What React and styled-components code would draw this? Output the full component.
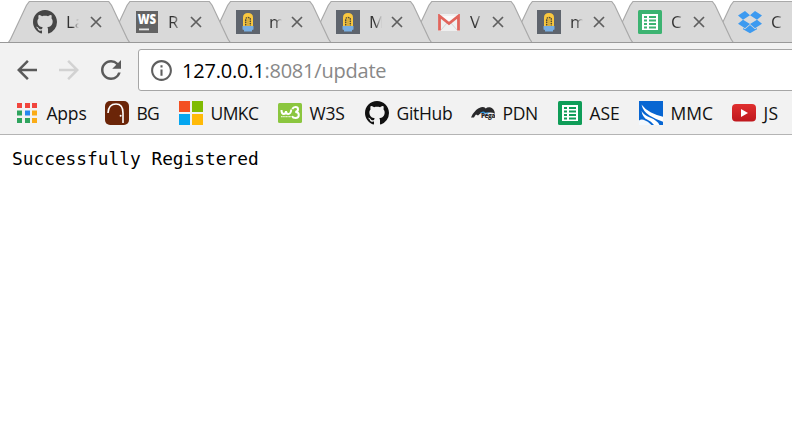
import React from "react";
import styled, { createGlobalStyle } from "styled-components";
import { MdArrowBack, MdArrowForward, MdRefresh, MdInfoOutline } from "react-icons/md";

const GlobalStyle = createGlobalStyle`
  body { margin: 0; background: #fff; overflow: hidden; }
  * { box-sizing: border-box; }
  svg { display: block; flex: none; }
`;

const Browser = styled.div`
  width: 792px;
  height: 445px;
  overflow: hidden;
  background: #fff;
  font-family: "Open Sans", "Noto Sans", sans-serif;
  font-size: 17.5px;
  color: #111;
`;

const TabStrip = styled.div`
  display: flex;
  height: 43px;
  padding: 1px 0 0 8px;
  border-bottom: 1px solid #999;
  isolation: isolate;
`;

const Tab = styled.div`
  position: relative;
  z-index: ${(p) => p.$order};
  flex: none;
  display: flex;
  align-items: center;
  width: 122px;
  height: 41px;
  margin-right: -21.4px;
  padding: 1px 0 0 ${(p) => p.$inset}px;
  &::before,
  &::after {
    content: "";
    position: absolute;
    z-index: -1;
    inset: 0;
    background: #a9a9a9;
    clip-path: polygon(0 100%, 2px 38px, 18px 4px, 21px 0, 101px 0, 104px 4px, 120px 38px, 122px 100%);
  }
  &::after {
    background: #d9d9d9;
    clip-path: polygon(1.4px 100%, 3.3px 38px, 19px 4.5px, 21.6px 1px, 100.4px 1px, 103px 4.5px, 118.7px 38px, 120.6px 100%);
  }
`;

const TabIcon = styled.span`
  flex: none;
  display: flex;
  justify-content: center;
  width: 24px;
  color: #464646;
`;

const TabTitle = styled.span`
  flex: none;
  width: 13px;
  margin-left: 9px;
  overflow: hidden;
  white-space: nowrap;
  font-size: 17px;
  line-height: 24px;
  color: #333;
  mask-image: linear-gradient(to right, #000 45%, transparent 100%);
`;

const CloseButton = styled.span`
  margin-left: ${(p) => p.$gap}px;
  color: #5f5f5f;
`;

const Toolbar = styled.div`
  display: flex;
  align-items: flex-start;
  height: 52px;
  padding-top: 6px;
  background: #f2f2f2;
`;

const NavButton = styled.span`
  flex: none;
  width: 42px;
  padding: 6px 0 0 12px;
  color: ${(p) => (p.$disabled ? "#d2d2d2" : "#5a5a5a")};
`;

const AddressBar = styled.div`
  flex: 1;
  display: flex;
  align-items: center;
  height: 42px;
  margin: 0 -4px 0 12px;
  padding-left: 10px;
  background: #fff;
  border: 1px solid #a6a6a6;
  border-radius: 3px;
  color: #5f5f5f;
`;

const Url = styled.span`
  margin-left: 8px;
  font-size: 20px;
  letter-spacing: -0.22px;
  color: #888;
`;

const Host = styled.span`
  color: #000;
`;

const BookmarkBar = styled.div`
  display: flex;
  height: 40px;
  padding-left: 15px;
  background: #f2f2f2;
  border-bottom: 1px solid #b4b4b4;
`;

const Bookmark = styled.div`
  flex: none;
  display: flex;
  align-items: center;
  gap: 7.5px;
  width: ${(p) => p.$width}px;
  height: 36px;
  letter-spacing: ${(p) => p.$tracking}px;
  white-space: nowrap;
`;

const PageText = styled.pre`
  margin: 12px 0 0 12px;
  font: 17.82px/24px "DejaVu Sans Mono", monospace;
  color: #000;
`;

const GitHubMark = () => (
  <svg width="24" height="24" viewBox="0 0 16 16">
    <path
      fill="currentColor"
      d="M8 0C3.58 0 0 3.58 0 8c0 3.54 2.29 6.53 5.47 7.59.4.07.55-.17.55-.38 0-.19-.01-.82-.01-1.49-2.01.37-2.53-.49-2.69-.94-.09-.23-.48-.94-.82-1.13-.28-.15-.68-.52-.01-.53.63-.01 1.08.58 1.23.82.72 1.21 1.87.87 2.33.66.07-.52.28-.87.51-1.07-1.78-.2-3.64-.89-3.64-3.95 0-.87.31-1.59.82-2.15-.08-.2-.36-1.02.08-2.12 0 0 .67-.21 2.2.82.64-.18 1.32-.27 2-.27.68 0 1.36.09 2 .27 1.53-1.04 2.2-.82 2.2-.82.44 1.1.16 1.92.08 2.12.51.56.82 1.27.82 2.15 0 3.07-1.87 3.75-3.65 3.95.29.25.54.73.54 1.48 0 1.07-.01 1.93-.01 2.2 0 .21.15.46.55.38A8.013 8.013 0 0 0 16 8c0-4.42-3.58-8-8-8z"
    />
  </svg>
);

const CloseGlyph = () => (
  <svg width="12" height="12" viewBox="0 0 12 12">
    <path d="M1 1 11 11M11 1 1 11" stroke="currentColor" strokeWidth="1.7" />
  </svg>
);

const WebStorm = () => (
  <svg width="22" height="22" viewBox="0 0 22 22">
    <rect width="22" height="22" fill="#636363" />
    <text x="1.7" y="12.7" fontFamily="Open Sans, sans-serif" fontWeight="800" fontSize="13.5" textLength="18.5" lengthAdjust="spacingAndGlyphs" fill="#fff">WS</text>
    <rect x="3" y="17.5" width="10" height="1.8" fill="#e5e5e5" />
  </svg>
);

const Minion = () => (
  <svg width="24" height="24" viewBox="0 0 24 24">
    <rect width="24" height="24" fill="#5e646d" />
    <path d="M7 17V7.5Q7 3 12 3t5 4.5V17Z" fill="#fac83f" />
    <path d="M6.5 16h11v3.5l-1.5.5v1.5H8V20l-1.5-.5Z" fill="#78aee2" />
    <path d="M9.7 15.5V9.5q0-2 2.3-2t2.3 2v6" fill="none" stroke="#4d4a38" strokeWidth="1.5" strokeDasharray="1.6 .7" />
    <path d="M12 9v7" stroke="#d3a93a" strokeWidth="1.6" />
  </svg>
);

const Gmail = () => (
  <svg width="22" height="17" viewBox="0 0 22 17">
    <rect width="22" height="17" rx="1.5" fill="#efefef" />
    <path d="m3 16 6-7m10 7-6-7" stroke="#d4d4d4" />
    <path d="M3 2h16l-8 6.5Z" fill="#fafafa" />
    <path d="M1.5 16.5V2L11 9.5 20.5 2v14.5" fill="none" stroke="#e1655c" strokeWidth="2.8" />
  </svg>
);

const Sheets = ({ color }) => (
  <svg width="24" height="24" viewBox="0 0 24 24">
    <rect width="24" height="24" rx="1.5" fill={color} />
    <rect x="4" y="4" width="16" height="16" fill="#fff" />
    <path d="M6 6h3v2H6Zm5 0h7v2h-7ZM6 9.5h3v2H6Zm5 0h7v2h-7ZM6 13h3v2H6Zm5 0h7v2h-7ZM6 16.5h3v2H6Zm5 0h7v2h-7Z" fill={color} />
  </svg>
);

const Dropbox = () => (
  <svg width="24" height="24" viewBox="0 0 24 24">
    <path d="m7 1 5 4.2-7 4.5L0 5.5ZM17 1l7 4.5-5 4.2-7-4.5ZM5 9.7l7 4.4-5 4.1-7-4.5ZM19 9.7l5 4-7 4.5-5-4.1ZM5 18l2 1.3 5-4.2 5 4.2 2-1.3v1.3l-7 4-7-4Z" fill="#3d9af0" />
  </svg>
);

const AppsGrid = () => (
  <svg width="24" height="24" viewBox="0 0 24 24">
    <path d="M2 2h5v5H2Zm8 0h5v5h-5Zm7 0h5v5h-5Z" fill="#f1453d" />
    <path d="M2 9.5h5v5H2ZM2 17h5v5H2Zm8 0h5v5h-5Z" fill="#2fa45e" />
    <path d="M10 9.5h5v5h-5Z" fill="#2688f0" />
    <path d="M17 9.5h5v5h-5Zm0 7.5h5v5h-5Z" fill="#faac17" />
  </svg>
);

const Door = () => (
  <svg width="24" height="24" viewBox="0 0 24 24">
    <rect width="24" height="24" rx="5" fill="#6b2508" />
    <path d="M3 12Q3.5 3 11 3q7 0 7 9v10" fill="none" stroke="#fff" strokeWidth="1.6" />
    <circle cx="15.6" cy="14.8" r="1" fill="#fff" />
  </svg>
);

const Windows = () => (
  <svg width="24" height="24" viewBox="0 0 24 24">
    <path d="M0 0h11v11H0Z" fill="#f35022" />
    <path d="M13 0h11v11H13Z" fill="#80bb03" />
    <path d="M0 13h11v11H0Z" fill="#05a6f0" />
    <path d="M13 13h11v11H13Z" fill="#ffba08" />
  </svg>
);

const W3Schools = () => (
  <svg width="24" height="20" viewBox="0 0 24 20">
    <rect width="24" height="20" rx="1.5" fill="#8bc63f" />
    <path d="M3.5 7q0 4 2.2 4T8 8q0 3 2.3 3 2.5 0 3-4.500" fill="none" stroke="#fff" strokeWidth="2" />
    <path d="M14.3 6q1-2 3.2-2 2.5 0 2.5 2.3 0 2.3-2.7 2.6 3.5 0 3.5 3.2 0 3-3.3 3-2.6 0-3.5-2" fill="none" stroke="#fff" strokeWidth="2" />
    <path d="M3 13.7h10" stroke="#e1f1cc" strokeWidth="1.2" strokeDasharray="1.3 .3" />
  </svg>
);

const Pega = () => (
  <svg width="24" height="14" viewBox="0 0 24 14">
    <path d="M0 11.5Q4 2.5 10 1.2q3-.6 4.8 1.2Q16 1 19 1.3q4 .6 5 6.4-3-1.500-5-1.300L14 7 10.500 6.500 7 9.500 5 8.500Q4 9.500 3 11.500Z" fill="#29292b" />
    <path d="M9 7q3-3 5.500-.3l4.500-.4-2.500 1.4Z" fill="#2c95dd" />
    <text x="10" y="11.8" fontFamily="Open Sans, sans-serif" fontWeight="800" fontSize="6" textLength="14" lengthAdjust="spacingAndGlyphs" fill="#29292b">Pega</text>
  </svg>
);

const Swoosh = () => (
  <svg width="24" height="24" viewBox="0 0 24 24">
    <rect width="24" height="24" fill="#0866d2" />
    <path d="M2.5 3.5Q6 8.5 12 11.5q6 3 12 4.2v5Q16 18 10.5 14.5 4 10.5 2.5 3.5Z" fill="#fff" />
    <path d="M2.5 10q2.5 4 8.5 6.5 7.5 3 9.5 7.5H15Q12 20 8.5 18.8 3.5 16.5 2.5 10Z" fill="#fff" />
    <path d="M0 19.5Q2 18 4.5 18.8 9 20 12.5 24H0Z" fill="#f3f8fd" />
  </svg>
);

const YouTube = () => (
  <svg width="24" height="18" viewBox="0 0 24 18">
    <defs>
      <linearGradient id="tubeRed" x2="0" y2="1">
        <stop stopColor="#e02f2f" />
        <stop offset="1" stopColor="#bf171d" />
      </linearGradient>
    </defs>
    <rect width="24" height="17.5" rx="4" fill="url(#tubeRed)" />
    <path d="m9 5 7 4-7 4Z" fill="#fff" />
  </svg>
);

const tabs = [
  { title: "La", inset: 25, icon: <GitHubMark /> },
  { title: "R", inset: 26.4, icon: <WebStorm /> },
  { title: "m", inset: 26.8, icon: <Minion /> },
  { title: "M", inset: 26.2, icon: <Minion /> },
  { title: "V", inset: 26.6, icon: <Gmail /> },
  { title: "m", inset: 26, icon: <Minion /> },
  { title: "C", inset: 26.4, icon: <Sheets color="#3cb371" /> },
  { title: "C", inset: 25.8, icon: <Dropbox /> },
];

const bookmarks = [
  { label: "Apps", width: 90, tracking: -0.2, icon: <AppsGrid /> },
  { label: "BG", width: 74, tracking: -0.9, icon: <Door /> },
  { label: "UMKC", width: 99, tracking: -0.6, icon: <Windows /> },
  { label: "W3S", width: 87, tracking: -0.2, icon: <W3Schools /> },
  { label: "GitHub", width: 106, tracking: -0.3, icon: <GitHubMark /> },
  { label: "PDN", width: 87, tracking: -0.4, icon: <Pega /> },
  { label: "ASE", width: 81, tracking: -0.1, icon: <Sheets color="#0f9d58" /> },
  { label: "MMC", width: 93, tracking: 0, icon: <Swoosh /> },
  { label: "JS", width: 60, tracking: 0.3, icon: <YouTube /> },
];

export default function App() {
  return (
    <Browser>
      <GlobalStyle />
      <TabStrip>
        {tabs.map((tab, i) => (
          <Tab key={i} $order={tabs.length - i} $inset={tab.inset}>
            <TabIcon>{tab.icon}</TabIcon>
            <TabTitle>{tab.title}</TabTitle>
            <CloseButton $gap={35.6 - tab.inset}><CloseGlyph /></CloseButton>
          </Tab>
        ))}
      </TabStrip>
      <Toolbar>
        <NavButton><MdArrowBack size={30} /></NavButton>
        <NavButton $disabled><MdArrowForward size={30} /></NavButton>
        <NavButton><MdRefresh size={30} /></NavButton>
        <AddressBar>
          <MdInfoOutline size={25} />
          <Url><Host>127.0.0.1</Host>:8081/update</Url>
        </AddressBar>
      </Toolbar>
      <BookmarkBar>
        {bookmarks.map((b) => (
          <Bookmark key={b.label} $width={b.width} $tracking={b.tracking}>
            {b.icon}
            <span>{b.label}</span>
          </Bookmark>
        ))}
      </BookmarkBar>
      <PageText>Successfully Registered</PageText>
    </Browser>
  );
}
